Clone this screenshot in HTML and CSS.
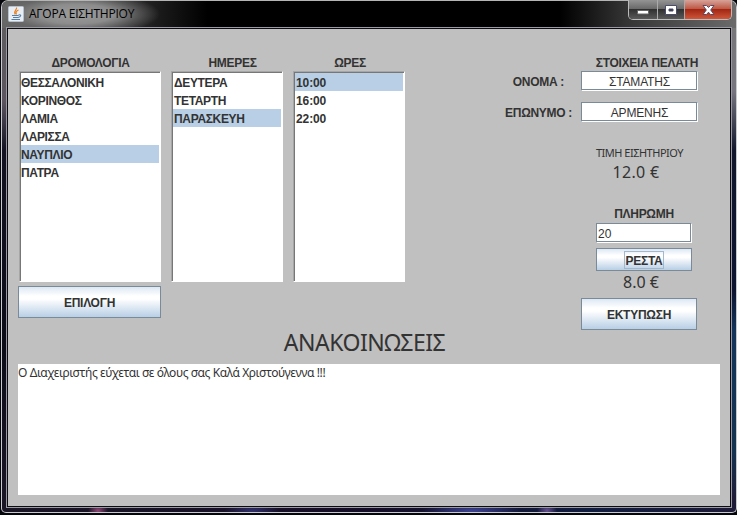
FILE: index.html
```
<!DOCTYPE html>
<html lang="el">
<head>
<meta charset="utf-8">
<title>ΑΓΟΡΑ ΕΙΣΗΤΗΡΙΟΥ</title>
<link rel="stylesheet" href="styles.css">
</head>
<body>
<div class="window">
  <header class="titlebar">
    <svg class="app-icon" width="16" height="16" viewBox="0 0 16 16">
      <rect x=".5" y=".5" width="15" height="15" rx="1" fill="#e9edf1" stroke="#b5c3d0"/>
      <path d="M8.500 1.500C9.500 3.500 5 4.500 7 8.500M10.500 4C8 5 7.500 6.500 8.500 8.500" fill="none" stroke="#e8801f" stroke-width="1.200"/>
      <path d="M4 9.500h6.500M5 11.500h5M3.500 13.500h8.500M10.500 9c3.500-1 2.500 2-.5 2.500" fill="none" stroke="#527fa8" stroke-width="1.100"/>
    </svg>
    <span class="title">ΑΓΟΡΑ ΕΙΣΗΤΗΡΙΟΥ</span>
    <div class="controls">
      <span class="ctl min"><svg width="12" height="12" viewBox="0 0 12 12"><rect x=".5" y="6.500" width="11" height="3.500" rx=".5" fill="#fff" stroke="#666"/></svg></span>
      <span class="ctl max"><svg width="12" height="12" viewBox="0 0 12 12"><path d="M.5 1.500h11v9H.5zM4 5v2h4V5z" fill="#fff" fill-rule="evenodd" stroke="#4b4d6c"/></svg></span>
      <span class="ctl close"><svg width="13" height="12" viewBox="0 0 13 12"><path d="M1 1.500h3.500l2 2 2-2H12L8.700 6l3.300 4.500H8.500l-2-2.300-2 2.300H1L4.300 6z" fill="#fff" stroke="#5b4a65"/></svg></span>
    </div>
  </header>
  <main class="client">
    <div class="top">
      <section class="column routes">
        <h2 class="label">ΔΡΟΜΟΛΟΓΙΑ</h2>
        <ul class="list">
          <li>ΘΕΣΣΑΛΟΝΙΚΗ</li><li>ΚΟΡΙΝΘΟΣ</li><li>ΛΑΜΙΑ</li><li>ΛΑΡΙΣΣΑ</li><li class="selected">ΝΑΥΠΛΙΟ</li><li>ΠΑΤΡΑ</li>
        </ul>
        <button class="button">ΕΠΙΛΟΓΗ</button>
      </section>
      <section class="column days">
        <h2 class="label">ΗΜΕΡΕΣ</h2>
        <ul class="list"><li>ΔΕΥΤΕΡΑ</li><li>ΤΕΤΑΡΤΗ</li><li class="selected">ΠΑΡΑΣΚΕΥΗ</li></ul>
      </section>
      <section class="column hours">
        <h2 class="label">ΩΡΕΣ</h2>
        <ul class="list"><li class="selected">10:00</li><li>16:00</li><li>22:00</li></ul>
      </section>
      <section class="customer">
        <h2 class="label heading">ΣΤΟΙΧΕΙΑ ΠΕΛΑΤΗ</h2>
        <div class="row"><span class="label name">ΟΝΟΜΑ :</span><div class="field">ΣΤΑΜΑΤΗΣ</div></div>
        <div class="row"><span class="label surname">ΕΠΩΝΥΜΟ :</span><div class="field">ΑΡΜΕΝΗΣ</div></div>
        <div class="payment">
          <div class="caption">ΤΙΜΗ ΕΙΣΗΤΗΡΙΟΥ</div>
          <div class="amount price">12.0 €</div>
          <div class="label pay">ΠΛΗΡΩΜΗ</div>
          <div class="field cash">20</div>
          <button class="button change"><span class="focus">ΡΕΣΤΑ</span></button>
          <div class="amount rest">8.0 €</div>
          <button class="button print">ΕΚΤΥΠΩΣΗ</button>
        </div>
      </section>
    </div>
    <h1 class="news-title"><span>ΑΝΑΚΟΙΝΩΣΕΙΣ</span></h1>
    <div class="news"><span>Ο Διαχειριστής εύχεται σε όλους σας Καλά Χριστούγεννα !!!</span></div>
  </main>
</div>
</body>
</html>
```
FILE: styles.css
```
* { box-sizing: border-box; }
body { margin: 0; width: 737px; height: 515px; overflow: hidden; background: #05050c; color: #333; font: bold 12px/18px "Liberation Sans", sans-serif; }
h1, h2, ul { margin: 0; padding: 0; list-style: none; }
.window {
  width: 736px; height: 513px; margin: 0 0 0 1px; padding: 0 5px 5px;
  border: 1px solid #c9c9d0; border-top-color: #b5b5b5; border-radius: 7px 7px 5px 5px;
  background:
    linear-gradient(#5f5f5f, #5c5560 100px, #121222 150px, #0c0c18 350px, #1b1626) 0 0 / 6px 500px no-repeat,
    linear-gradient(#777, #777680 90px, #11162c 150px, #0c1430 290px, #14345a 330px, #143350 450px, #211c38) 100% 0 / 6px 500px no-repeat,
    radial-gradient(ellipse 10px 9px at 96px 510px, #8d4774, transparent),
    radial-gradient(ellipse 28px 9px at 250px 510px, #30306b, transparent),
    radial-gradient(ellipse 50px 9px at 470px 510px, #3d4394, transparent),
    radial-gradient(ellipse 10px 9px at 545px 510px, #65508e, transparent),
    linear-gradient(90deg, #1b1626, #160e28 50%, #111d40 80%, #1e1b38);
}
.titlebar {
  display: flex; height: 27px; margin: 0 -5px; padding-left: 6px; border-radius: 6px 6px 0 0;
  background: radial-gradient(ellipse 84px 22px at 74px 13px, #9c9c9c 0, #8c8c8c 45%, rgba(110,110,110,.6) 75%, transparent 100%),
    linear-gradient(90deg, #666 0, #444 12%, #1c1c1c 21%, #000 28%, #000 76%, #343434 85%, #6a6a6a 100%);
}
.app-icon { margin-top: 5px; }
.title { margin: 4px 0 0 5px; color: #000; font: 12px/18px "Open Sans", sans-serif; letter-spacing: -.23px; }
.controls { display: flex; width: 104px; height: 20px; margin: -1px 4px 0 auto; border: 1px solid #bbb; border-top: 0; border-radius: 0 0 5px 5px; overflow: hidden; }
.ctl { display: flex; justify-content: center; align-items: center; background: linear-gradient(#949494, #686868 48%, #303030 50%, #5a5a5a); border-right: 1px solid #aaa; }
.min { width: 29px; }
.max { width: 27px; }
.close { flex: 1; border: 0; background: linear-gradient(#d7a298, #bd5542 48%, #a32714 50%, #cf563a); }
.client { height: 479px; padding: 0 10px; border: 1px solid #0b0b10; outline: 1px solid #9a9aa5; background: silver; }
.top { display: flex; gap: 10px; height: 302px; padding-top: 25px; }
.column { width: 112px; }
.routes { width: 143px; }
.label { font: bold 12px/19px "Liberation Sans", sans-serif; letter-spacing: -.3px; text-align: center; white-space: nowrap; }
.column .label, .heading { height: 17px; }
.column .label { padding-left: 2px; }
.days .label { padding-left: 11px; }
.list { height: 211px; border: 1px solid #a6a6a6; border-right-color: #fff; border-bottom-color: #fff; box-shadow: inset 1px 1px #777; padding: 1px 0 0 1px; background: #fff; letter-spacing: -.35px; }
.routes .list { margin-left: 1px; }
.list li { height: 18px; margin-right: 1px; padding-left: 1px; line-height: 20px; }
.routes .list li { padding-left: 0; }
.hours .list { letter-spacing: -.1px; }
.list .selected { background: #b8cfe5; }
.button { display: block; padding: 0; border: 1px solid #7a8a99; color: #333; font: bold 12px/14px "Liberation Sans", sans-serif; letter-spacing: -.25px; background: linear-gradient(#dde8f3 0, #fff 30%, #fff 40%, #b8cfe5 100%); }
.routes .button { width: 143px; height: 32px; margin-top: 4px; padding-top: 2px; }
.customer { width: 198px; margin-left: 85px; }
.row { display: flex; justify-content: flex-end; height: 20px; margin-bottom: 11px; }
.heading { text-align: right; }
.row .label { line-height: 23px; }
.name { margin-right: 17px; }
.surname { margin-right: 9px; }
.field { width: 117px; height: 20px; border: 1px solid #7a8a99; border-bottom-color: #fff; border-right-color: #fff; box-shadow: inset -1px -1px #7a8a99; background: #fff; font: 12px/20px "Liberation Sans", sans-serif; letter-spacing: -.2px; text-align: center; }
.payment { display: flex; flex-direction: column; align-items: center; width: 126px; margin: 24px 0 0 76px; }
.caption { margin-left: 1px; font: 11px/14px "Noto Sans", sans-serif; letter-spacing: -.5px; white-space: nowrap; }
.amount { font: 16px/22px "Noto Sans", sans-serif; }
.price { margin: 1px 6px 0 0; letter-spacing: .3px; }
.pay { height: 18px; margin: 22px 0 0 10px; }
.cash { width: 96px; margin-left: 10px; padding-left: 1px; text-align: left; letter-spacing: 0; }
.change { width: 96px; height: 23px; margin: 5px 0 0 10px; }
.focus { display: inline-block; height: 18px; border: 1px solid #a3b8cc; line-height: 18px; }
.rest { margin-left: 4px; }
.print { width: 116px; height: 32px; margin-top: 5px; padding-top: 2px; }
.news-title { height: 33px; padding-right: 9px; font: 23px/23px "Noto Sans", sans-serif; letter-spacing: -.5px; text-align: center; }
.news { height: 131px; background: #fff; font: 12px/18px "Noto Sans", sans-serif; letter-spacing: -.41px; }
```
